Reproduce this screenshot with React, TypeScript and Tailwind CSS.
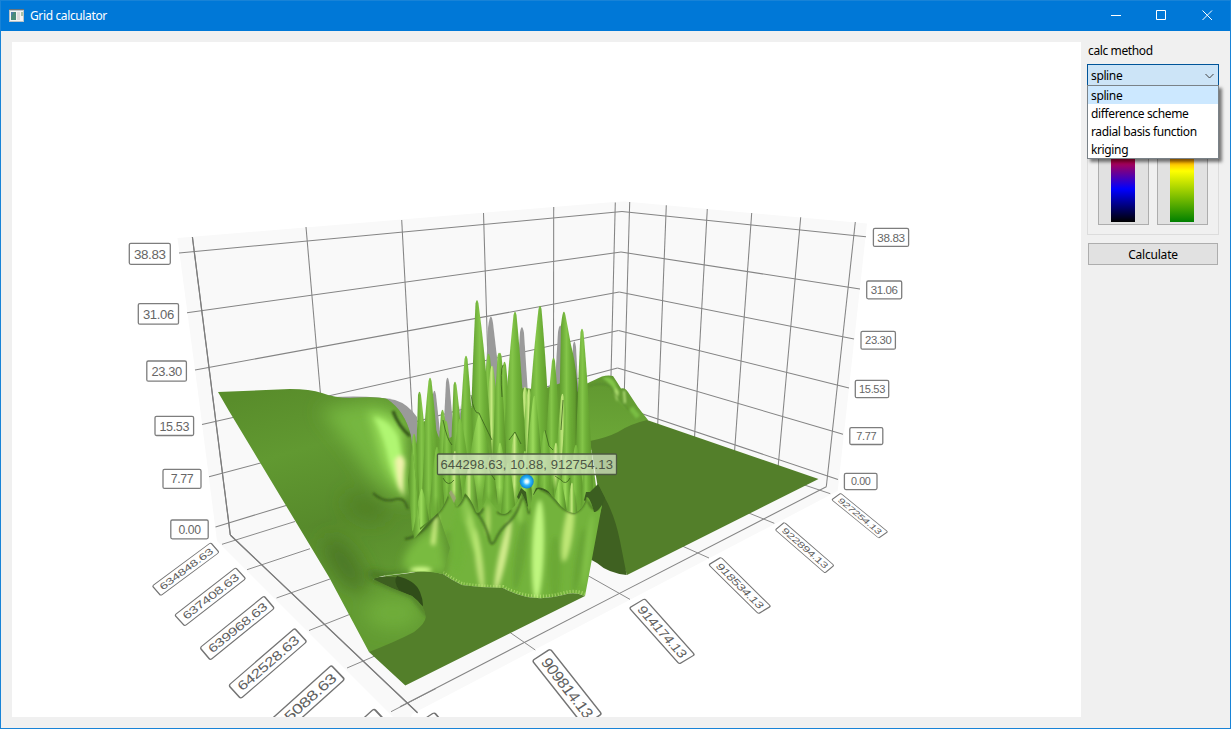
import React from "react";

type Pt = [number, number];

const GRID: number[][] = [
  [179, 253, 622, 211.5], [187, 312.7, 621, 252], [195, 370, 619.3, 292], [202, 424.5, 618.5, 330.5],
  [209, 476.7, 617.5, 368], [215.5, 527, 616, 405],
  [622, 211.5, 866, 236.7], [621, 252, 860, 289], [619.3, 292, 854, 339], [618.5, 330.5, 849, 388],
  [617.5, 368, 843, 434.3], [616, 405, 838, 479.5],
  [192.4, 237, 230.3, 535], [306, 227, 321, 400], [401.7, 220, 413, 430], [483.5, 213, 488.5, 380],
  [553.7, 207, 553.5, 370], [615.3, 202.5, 611, 376],
  [629.7, 202, 624.3, 392], [666.3, 205.3, 657.7, 425], [707.3, 209, 694.5, 438],
  [751.7, 213, 734.5, 452], [800.7, 217.3, 778, 468], [855.3, 222, 826.3, 486.7],
  [230.3, 535, 417.5, 712.7], [400, 706.7, 619, 593.6], [619, 593.6, 826.3, 486.7],
];

const FLOOR: number[][] = [
  [222, 544.3, 295, 521.5], [247, 569.7, 310, 548.7], [276.5, 598, 330, 579], [309, 630.5, 352, 613.5],
  [347, 668, 376, 655.5], [391, 711.7, 436, 688.5],
  [585, 574, 630, 599.4], [505, 629, 535.3, 650], [395, 691, 417.3, 712.7],
  [680, 545, 709, 558], [747, 512.3, 774.3, 523.3], [803, 484.5, 830.3, 493.7],
];

const TAGS: [string, number, number, number, number, number][] = [
  ["38.83", 129.3, 243.3, 41, 21, 13.4], ["31.06", 138.3, 303.6, 40.2, 20.6, 13.1], ["23.30", 146.8, 361, 39.6, 20.2, 12.9],
  ["15.53", 155, 416.3, 38.6, 19.2, 12.6], ["7.77", 163, 469.4, 38, 19, 12.4], ["0.00", 170.8, 520, 37.4, 18.8, 12.2],
  ["38.83", 873.4, 228.4, 35.2, 18, 11.7], ["31.06", 866.7, 281, 35, 17.8, 11.5], ["23.30", 861, 331.4, 34.4, 17.8, 11.3],
  ["15.53", 855.3, 380.3, 33.4, 17.4, 11.1], ["7.77", 849.8, 427.7, 33, 16.8, 11], ["0.00", 844.4, 473.4, 32.6, 16.2, 10.8],
];

const SLANTED: [string, Pt, Pt, Pt][] = [
  ["634848.63", [152.3, 586], [210.7, 542.7], [160.7, 595.7]],
  ["637408.63", [174.7, 615], [235.7, 567.7], [184.7, 626]],
  ["639968.63", [200, 647.7], [264, 596], [210.3, 660]],
  ["642528.63", [228.7, 685.3], [294.7, 628.3], [240.7, 698.7]],
  ["645088.63", [260, 729.5], [331.3, 665.3], [273.3, 743.5]],
  ["", [296, 780], [374, 708.7], [309, 794]],
  ["927254.13", [840.7, 493.3], [887.7, 531.7], [831.7, 499.7]],
  ["922894.13", [784.3, 522.3], [834, 565.3], [775.3, 530]],
  ["918534.13", [721, 557.3], [770.7, 606.3], [708.7, 564.7]],
  ["914174.13", [644.7, 598.7], [694.7, 654.7], [629.3, 608]],
  ["909814.13", [550.3, 649], [601.7, 714], [532.3, 660.7]],
  ["", [434.3, 712.3], [480, 768], [414, 726]],
];

/* x of the tip, y of the tip, left reach, right reach, y of the foot, paint */
type Peak = [number, number, number, number, number, string];

const BACK: Peak[] = [
  [500, 352, 7, 8, 450, "a"], [488.5, 353, 8, 9, 460, "a"], [492, 365, 9, 10, 460, "b"], [504.5, 361, 7, 7, 440, "a"],
  [525, 386, 12, 13, 470, "b"], [529, 388, 9, 10, 470, "b"], [535, 393, 8, 12, 480, "a"],
  [477, 299.5, 8, 17, 490, "a"], [466, 355, 9, 10, 500, "a"], [455, 381, 5, 10, 490, "a"], [442.5, 409, 6, 10, 490, "a"],
  [515, 311, 14, 13, 500, "a"],
  [540, 305, 15, 12, 490, "a"], [553.5, 357, 10, 9, 490, "a"], [571, 372, 12, 10, 480, "a"],
];

const MID: Peak[] = [
  [430, 377, 11, 12, 520, "a"], [419.5, 391, 5, 12, 530, "a"], [428, 411, 7, 11, 520, "a"], [446, 420, 6, 10, 510, "a"],
  [414, 433, 6, 7, 530, "a"], [460, 418, 10, 12, 500, "a"], [479, 414, 14, 17, 500, "c"], [499, 352, 7, 8, 480, "a"],
  [562.5, 393, 8, 9, 490, "b"], [568, 398, 9, 9, 510, "a"], [582, 328, 8, 12, 515, "a"], [534.5, 395, 11, 10, 510, "c"],
  [515, 432, 9, 10, 505, "b"], [545, 429, 9, 10, 505, "a"], [500, 442, 9, 10, 505, "c"],
  [556, 442, 7, 8, 490, "b"], [576, 444, 9, 9, 510, "a"], [437, 446, 8, 8, 515, "a"], [455, 450, 8, 8, 505, "b"],
  [490, 456, 8, 8, 505, "a"], [525, 450, 8, 8, 505, "c"], [566, 455, 8, 8, 515, "c"],
  [421.7, 488, 9, 10, 540, "c"], [470, 462, 9, 9, 515, "b"], [508, 462, 8, 9, 525, "a"], [587, 455, 7, 7, 515, "a"],
  [560, 478, 10, 9, 530, "c"], [545, 474, 7, 8, 520, "a"], [572, 482, 6, 7, 530, "b"],
];

const PAINT: Record<string, string> = { a: "url(#a)", b: "url(#b)", c: "url(#c)" };

const peak = ([x, y, l, r, f]: Peak): string => {
  const h = f - y;
  return `M${x - l} ${f}C${x - l * 0.72} ${f - h * 0.45} ${x - l * 0.5} ${f - h * 0.7} ${x - 1.5} ${y + 4}Q${x} ${y - 3} ${x + 1.5} ${y + 4}C${x + r * 0.5} ${f - h * 0.7} ${x + r * 0.72} ${f - h * 0.45} ${x + r} ${f}Z`;
};

/* x, y, horizontal radius, vertical radius, tilt, colour, opacity */
const SHEEN: [number, number, number, number, number, string, number][] = [
  [434, 536, 2.5, 24, 6, "#d9f78c", 0.95], [446, 555, 5, 25, 6, "#4b7a22", 0.25], [458, 540, 7, 32, 3, "#6eb238", 0.7],
  [479, 560, 3.5, 32, -7, "#d5f28c", 0.75], [472, 530, 4, 34, -14, "#b6ea70", 0.7],
  [503, 555, 4, 36, 12, "#e3f79b", 0.85], [488, 520, 2, 16, 0, "#cdef7d", 0.8],
  [520, 555, 5, 35, 8, "#548b27", 0.35], [538, 550, 6, 50, 2, "#c3fa83", 0.95], [555, 570, 6, 34, 0, "#629e2e", 0.45],
  [568, 532, 5, 30, 8, "#d1f484", 0.8], [579, 560, 3.5, 33, 9, "#5b942b", 0.45], [588, 550, 3, 36, 7, "#87c84b", 0.7],
  [422, 570, 14, 3, 0, "#d3ff8a", 0.85], [520, 510, 2.5, 13, 0, "#a8e566", 0.6], [465, 508, 4, 16, 0, "#83c348", 0.8],
];

function Slanted({ text, p }: { text: string; p: [Pt, Pt, Pt] }) {
  const [a, b, c] = p;
  const m = [(b[0] - a[0]) / 80, (b[1] - a[1]) / 80, (c[0] - a[0]) / 20, (c[1] - a[1]) / 20, a[0], a[1]];
  return (
    <g transform={`matrix(${m.join(" ")})`}>
      <rect width="80" height="20" rx="2" fill="#fff" stroke="#747474" strokeWidth="1.4" />
      <text x="40.500" y="15.200" fontSize="14.500" textLength="70" lengthAdjust="spacingAndGlyphs" textAnchor="middle" fill="#606060">{text}</text>
    </g>
  );
}

function Plot() {
  const drape =
    "M396 548Q407 542 415 532Q430 520 438 513Q444 507 448 495Q453 504 457 507Q461 503 465 493Q472 500 476 512Q480 516 487 497Q493 505 500 513Q506 516 510 510Q517 506 521.7 493Q527 503 529 512Q533 492 538 489Q550 492 556 500Q565 513 575 513Q583 510 586.7 497Q590 497 594 512Q597 513 602 505L585 596Q574 591 563 595Q545 600 527 597Q514 594 503 588Q480 588 462 585Q452 580 443 574Q425 570 406 573L385 576Z";
  const land =
    "M218 392L290 389Q310 389 322 393Q335 398 350 398Q378 396 387 399Q405 411 411 436L416 480L420 530L438 513L450 548L443 574Q420 569 404 573Q385 574 373 579Q390 588 412 596Q424 605 425.5 616Q427 622 414 632Q397 641 369 652L329 577L229 411Z";
  return (
    <svg className="block h-[675px] w-[1069px] shrink-0 bg-white" viewBox="12 42 1069 675" fontFamily="'Liberation Sans', Arial, sans-serif">
      <defs>
        <linearGradient id="a">
          <stop offset="0" stopColor="#5a8f2a" /><stop offset=".2" stopColor="#6aa936" /><stop offset=".42" stopColor="#84c549" />
          <stop offset=".6" stopColor="#6fb138" /><stop offset=".85" stopColor="#609a2d" /><stop offset="1" stopColor="#3f6a1d" />
        </linearGradient>
        <linearGradient id="b">
          <stop offset="0" stopColor="#5c952b" /><stop offset=".25" stopColor="#7dbd45" /><stop offset=".45" stopColor="#c6e981" />
          <stop offset=".58" stopColor="#80c046" /><stop offset="1" stopColor="#46741f" />
        </linearGradient>
        <linearGradient id="c">
          <stop offset="0" stopColor="#5c952b" /><stop offset=".25" stopColor="#79b941" /><stop offset=".45" stopColor="#9cdb5c" />
          <stop offset=".65" stopColor="#72b43a" /><stop offset="1" stopColor="#3f6a1d" />
        </linearGradient>
        <linearGradient id="fadeStops" x1="0" y1="0" x2="0" y2="1">
          <stop offset=".72" stopColor="#fff" /><stop offset="1" stopColor="#000" />
        </linearGradient>
        <mask id="fade" maskContentUnits="objectBoundingBox"><rect width="1" height="1" fill="url(#fadeStops)" /></mask>
        <linearGradient id="land" gradientUnits="userSpaceOnUse" x1="270" y1="390" x2="330" y2="600">
          <stop offset="0" stopColor="#598d2b" /><stop offset=".3" stopColor="#619931" /><stop offset=".65" stopColor="#578a2b" /><stop offset="1" stopColor="#629b32" />
        </linearGradient>
        <linearGradient id="hill" x1="0" y1="0" x2="0" y2="1">
          <stop offset="0" stopColor="#609730" /><stop offset="1" stopColor="#6da938" />
        </linearGradient>
        <linearGradient id="mass" x1="0" y1="0" x2="0" y2="1">
          <stop offset="0" stopColor="#60992e" /><stop offset="1" stopColor="#72b33b" />
        </linearGradient>
        <radialGradient id="ball" cx=".5" cy=".5" r=".5">
          <stop offset="0" stopColor="#fff" /><stop offset=".22" stopColor="#d8f6ff" /><stop offset=".55" stopColor="#2fb8ff" /><stop offset="1" stopColor="#0c82d0" />
        </radialGradient>
        <filter id="s1" x="-100%" y="-100%" width="300%" height="300%"><feGaussianBlur stdDeviation=".8" /></filter>
        <filter id="s2" x="-100%" y="-100%" width="300%" height="300%"><feGaussianBlur stdDeviation="2.2" /></filter>
        <filter id="s25" x="-100%" y="-100%" width="300%" height="300%"><feGaussianBlur stdDeviation="4.5" /></filter>
        <filter id="s3" x="-100%" y="-100%" width="300%" height="300%"><feGaussianBlur stdDeviation="9" /></filter>
        <clipPath id="cDrape"><path d={drape} /></clipPath>
        <clipPath id="cLand"><path d={land} /></clipPath>
      </defs>

      <path d="M177.5 238L614 202L625 201.5L867 223.5L837.7 491L412 714L410 720H396L217 541L199 400Z" fill="#f9f9f9" />
      <g stroke="#848484" strokeWidth="1.05">
        {GRID.map((l, i) => <line key={i} x1={l[0]} y1={l[1]} x2={l[2]} y2={l[3]} />)}
      </g>
      <g stroke="#858585" strokeWidth=".95">
        {FLOOR.map((l, i) => <line key={i} x1={l[0]} y1={l[1]} x2={l[2]} y2={l[3]} />)}
      </g>
      <g stroke="#7c7c7c" strokeWidth="1.2">
        <line x1="192.4" y1="237" x2="230.3" y2="535" /><line x1="230.3" y1="535" x2="417.5" y2="712.7" />
      </g>

      <g fill="#9a9a9a">
        <path d="M330 397Q375 395 395 400Q408 404 417 417V460H395Z" />
        <path d="M483 440L488 328Q490.5 308 493 323L502 400V440Z" />
        <path d="M515 410L520 332Q522 322 524 333L529 410Z" />
        <path d="M554 400L558 332Q560 320 562 330L566 400Z" />
        <path d="M570 420L573 345Q574.5 337 576 347L580 420Z" />
        <path d="M430 440L433 394Q434.5 387 436 395L442 450Z" />
        <path d="M442 460L446 382Q447.8 372 449.5 385L456 460Z" />
        <path d="M458 430L460 405L463 430Z" />
      </g>

      <path d="M584 385Q596 379 602 376.500Q608 375 613 376Q617 382 621 388.500Q625 387 628 392Q637 407 648 420L630 445L590 450Z" fill="url(#hill)" />
      <g filter="url(#s1)">
        <path d="M602 378Q611 375 615 383Q618 389 618 400L631 415Q621 404 615 393Q612 384 602 378Z" fill="#82c64a" />
        <path d="M616 387L619 392L617 402L614 393Z" fill="#a8d96a" />
        <path d="M624 391L625 403" stroke="#bfe683" strokeWidth="1.800" />
        <path d="M631 408L638 417" stroke="#79bd43" strokeWidth="5" />
        <path d="M589 386Q600 382 611 386Q615 397 630 411" fill="none" stroke="#50802a" strokeWidth="1" />
      </g>

      <path d="M590 441Q606 438 618 432Q630 424 647 420L818.500 479L627 575L600 500Z" fill="#537f2a" />
      <path d="M590 500L598 485L605 498Q615 516 620 541L626.700 575Q608 573 597 563L588 558Z" fill="#3f6121" />

      <path d="M408 440L414 452L421 425L430 415L440 440L446 440L455 435L466 410L478 405L492 390L500 395L512 390L525 388L540 390L555 385L570 380L583 400L590 440L596 486L602 505L596 530L415 545Z" fill="url(#mass)" />
      {BACK.map((p, i) => <path key={i} d={peak(p)} fill={PAINT[p[5]]} mask="url(#fade)" />)}
      <path d="M558 480L561 325Q563.500 302 566 318L571 345Q579 375 578 420V480Z" fill="url(#a)" mask="url(#fade)" />
      {MID.map((p, i) => <path key={i} d={peak(p)} fill={PAINT[p[5]]} mask="url(#fade)" />)}
      <g fill="none" stroke="#375c1a" strokeWidth="1" opacity=".75">
        <path d="M471 395Q474 415 479 413Q484 424 492 440" /><path d="M509 440L515 432L521 444" />
        <path d="M502 397Q500 370 503 365" /><path d="M563 400L561 430" /><path d="M490 460Q487 470 495 480" />
        <path d="M443 420Q447 440 452 445" /><path d="M545 430L549 446L553 450" />
        <path d="M555 476L561 480Q566 486 570 478" /><path d="M443 478Q448 488 454 480" />
      </g>
      <path d="M449 493L451 490L456 498L454 503Z" fill="#a0a07c" opacity=".8" />
      <path d="M517 497L521 488L526 492L528 507L522 503ZM533 495L536 488Q541 486 548 491L552 496L540 492ZM584 500L586 492L590 492L598 484L605 498L601 508L594 514Z" fill="#3b5e20" />

      <path d={drape} fill="#73b33c" />
      <g clipPath="url(#cDrape)">
        <g filter="url(#s2)">
          {SHEEN.map(([x, y, rx, ry, t, c, o], i) => (
            <ellipse key={i} cx={x} cy={y} rx={rx} ry={ry} fill={c} opacity={o} transform={`rotate(${t} ${x} ${y})`} />
          ))}
        </g>
        <g filter="url(#s1)" fill="none" stroke="#3d641d">
          <path d="M407 541Q414 539 418 531L437 514Q444 507 448 496" strokeWidth="2" />
          <path d="M456 506Q462 505 465 494Q471 500 476 512Q480 517 483 508" strokeWidth="2" />
          <path d="M477 513Q485 523 489 538Q491 548 495 541Q500 529 509 522Q517 515 522 498" strokeWidth="1.800" />
          <path d="M522 494Q528 503 529 514" strokeWidth="2" />
          <path d="M540 489Q548 491 556 501Q565 512 574 513Q583 509 586 498" strokeWidth="2" />
          <path d="M588 501Q592 512 599 508" strokeWidth="1.500" />
          <path d="M497 512Q504 517 511 510" strokeWidth="2" />
        </g>
        <path d="M410 572Q425 568 443 573Q452 579 462 584Q480 587 503 587Q514 593 527 595.500Q545 598.500 563 593.500Q574 590 585 594" fill="none" stroke="#cbee86" strokeWidth="4" strokeDasharray="1 2" opacity=".6" />
      </g>

      <path d="M369 652Q390 620 373 578Q391 575 410 573Q426 569 443 574Q452 580 462 585Q482 588 503 588Q514 594 527 597Q545 600 563 595Q574 591 585 596L405.300 685.500Z" fill="#537f2a" />
      <path d="M373 578Q401 574 412 583Q421 592 423 606L408 600L383 592Z" fill="#3d5f20" />
      <path d="M397 576Q415 580 420 592Q423 599 423 606Q413 596 399 590Q393 581 397 576Z" fill="#304d19" />

      <path d={land} fill="url(#land)" />
      <g clipPath="url(#cLand)">
        <g filter="url(#s3)">
          <path d="M320 410Q345 405 372 401Q392 402 402 413L408 505Q385 495 365 470Q350 445 320 410Z" fill="#76b73f" />
          <ellipse cx="345" cy="565" rx="14" ry="32" transform="rotate(-34 345 565)" fill="#46701f" opacity=".75" />
          <ellipse cx="393" cy="613" rx="28" ry="17" fill="#70ad3a" />
          <ellipse cx="365" cy="508" rx="22" ry="12" transform="rotate(25 365 508)" fill="#4e7d25" opacity=".7" />
        </g>
        <g filter="url(#s25)">
          <path d="M368 412Q393 412 403 430L406 497Q390 482 381 458Z" fill="#93d854" />
          <path d="M369 573Q392 582 410 574" stroke="#395d1c" strokeWidth="5" fill="none" />
          <path d="M418 538L440 522L446 572H407Q396 560 418 538Z" fill="#79bb41" />
        </g>
        <g filter="url(#s2)">
          <path d="M374 417Q390 420 398 437Q404 465 403 494Q394 480 389 461Q385 440 374 417Z" fill="#b0f672" />
          <path d="M395 460Q402 450 405 462Q402 485 404 497L398 486Z" fill="#f1f3ad" />
          <path d="M436 517L433 545" stroke="#d9f58c" strokeWidth="4" />
          <ellipse cx="421" cy="570" rx="11" ry="3" fill="#d6ff91" />
          <path d="M373 579Q390 588 412 596L428 616" fill="none" stroke="#4b7625" strokeWidth="3" />
        </g>
        <g filter="url(#s1)" fill="none" stroke="#375a1b">
          <path d="M373 493Q382 502 393 500Q401 497 405 502L408 509" strokeWidth="1.800" />
          <path d="M393 411Q399 427 410 436" strokeWidth="3.500" />
          <path d="M405 539Q415 538 425 528L438 513" strokeWidth="2" />
        </g>
        <path d="M408 480L414 433Q419 490 423 495L416 537L412 530Z" fill="url(#a)" />
        <path d="M413 531L421.700 489Q428 521 430 520L414 539Z" fill="url(#c)" />
      </g>

      {TAGS.map(([t, x, y, w, h, s], i) => (
        <g key={i}>
          <rect x={x} y={y} width={w} height={h} rx="1.500" fill="#fff" stroke="#7d7d7d" strokeWidth="1.300" />
          <text x={x + w / 2} y={y + h / 2 + s * 0.37} fontSize={s} textAnchor="middle" fill="#666">{t}</text>
        </g>
      ))}
      {SLANTED.map(([t, a, b, c], i) => <Slanted key={i} text={t} p={[a, b, c]} />)}

      <rect x="437.500" y="454" width="179" height="20.500" rx="1" fill="#dce7cd" fillOpacity=".7" stroke="#4c5a40" strokeWidth="1.300" />
      <text x="526.500" y="468.700" fontSize="13" textLength="172" textAnchor="middle" fill="#4c5545">644298.63, 10.88, 912754.13</text>
      <circle cx="526.700" cy="481.500" r="7" fill="url(#ball)" />
    </svg>
  );
}

const METHODS = ["spline", "difference scheme", "radial basis function", "kriging"];

export default function App() {
  return (
    <div className="flex h-[729px] w-[1231px] flex-col overflow-hidden border border-[#1883d7] bg-[#f0f0f0] font-['Noto_Sans',sans-serif] text-[12px] leading-[20px] tracking-[-0.37px] text-black">
      <header className="flex h-[30px] shrink-0 items-center bg-[#0078d7] text-white">
        <svg className="mb-0.5 ml-2 h-[13px] w-[15px]" viewBox="0 0 15 13">
          <rect width="15" height="13" fill="#b9c3c8" /><rect x="1" y="2" width="13" height="10" fill="#f4f4f2" />
          <rect x="2" y="3" width="5" height="8" fill="#4a8b78" /><path d="M2 3h3l-3 5z" fill="#4c7fa5" />
          <rect x="8" y="3" width="3" height="8" fill="#dcdcdc" /><path d="M12 3h2v4h-2z" fill="#a9c4a8" /><path d="M0 0h15v1H0z" fill="#66737b" />
        </svg>
        <span className="ml-1.5 flex-1">Grid calculator</span>
        <svg className="h-[30px] w-[137px]" viewBox="0 0 137 30" fill="none" stroke="#fff" strokeWidth="1">
          <path d="M18 14.500h10M63.500 9.500h9v9h-9zM109.500 9.500l9.500 9.500M119 9.500l-9.500 9.500" />
        </svg>
      </header>
      <main className="flex flex-1 pl-[11px] pt-[11px]">
        <Plot />
        <aside className="ml-1.5 flex w-[132px] flex-col">
          <div className="h-[22px] pl-px leading-[18px]">calc method</div>
          <div className="relative z-10">
            <div className="flex h-[22px] items-center justify-between border border-[#005499] bg-[#cce4f7] pl-[3px] pr-1">
              <span className="pt-0.5">spline</span>
              <svg className="mt-0.5 h-[10px] w-[9px]" viewBox="0 0 9 10" fill="none" stroke="#404040"><path d="M.5 3l4 4 4-4" /></svg>
            </div>
            <ul className="absolute left-0 top-[21px] w-full border border-[#7a8288] bg-white shadow-[3px_3px_3px_rgba(0,0,0,0.5)]">
              {METHODS.map((m, i) => (
                <li key={m} className={i === 0 ? "h-[18px] bg-[#cce8ff] pl-[3px]" : "h-[18px] pl-[3px]"}>{m}</li>
              ))}
            </ul>
          </div>
          <div className="mt-2 flex h-[141px] items-end gap-2 border border-[#dcdcdc] px-2.5 pb-[9px]">
            <div className="flex h-[104px] w-[51px] border border-[#adadad] bg-[#e1e1e1] py-0.5 pl-3">
              <div className="w-6 bg-[linear-gradient(to_top,#000_0,#00f_33px,#f00_72px,#ff0_99px)]" />
            </div>
            <div className="flex h-[104px] w-[51px] border border-[#adadad] bg-[#e1e1e1] py-0.5 pl-3">
              <div className="w-6 bg-[linear-gradient(to_top,#008000_0,#ff0_51px,#f00_82px,#800000_99px)]" />
            </div>
          </div>
          <button className="mx-px mt-2 h-[22px] border border-[#adadad] bg-[#e1e1e1] leading-[22px] tracking-[-0.2px]">Calculate</button>
        </aside>
      </main>
    </div>
  );
}
